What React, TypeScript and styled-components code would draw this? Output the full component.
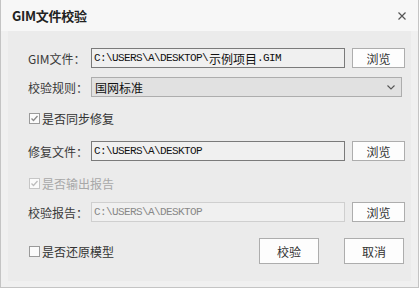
import React from 'react';
import styled, { createGlobalStyle } from 'styled-components';

const GlobalStyle = createGlobalStyle`
    html, body {
        margin: 0;
        padding: 0;
        background: #f0f0f0;
    }
    * {
        box-sizing: border-box;
    }
`;

const Window = styled.div`
    width: 419px;
    height: 288px;
    background: #f0f0f0;
    border: 1px solid #c4c4c4;
    border-top: none;
    display: flex;
    flex-direction: column;
    font-family: 'Noto Sans CJK SC', 'Noto Sans', sans-serif;
    color: #333;
    overflow: hidden;
`;

const TitleBar = styled.div`
    height: 31px;
    flex: none;
    background: #f7f7f7;
    display: flex;
    align-items: center;
    justify-content: space-between;
    padding: 0 10px 0 11px;
`;

const Title = styled.div`
    font-size: 13px;
    font-weight: bold;
    color: #222;
    letter-spacing: -0.3px;
`;

const CloseButton = styled.div`
    width: 12px;
    height: 12px;
    display: flex;
    align-items: center;
    justify-content: center;
`;

const Outer = styled.div`
    flex: 1;
    padding: 0 7px 6px 7px;
    display: flex;
`;

const Panel = styled.div`
    flex: 1;
    background: #ebebeb;
    padding: 17px 0 0 19px;
    display: flex;
    flex-direction: column;
`;

const Row = styled.div<{ $mt?: number; $h?: number }>`
    display: flex;
    align-items: center;
    height: ${({ $h }) => $h ?? 20}px;
    margin-top: ${({ $mt }) => $mt ?? 0}px;
`;

const Label = styled.div`
    width: 64px;
    font-size: 12px;
    color: #3a3a3a;
    padding-left: 1px;
    white-space: nowrap;
`;

const Field = styled.div<{ $disabled?: boolean }>`
    width: 254px;
    height: 20px;
    border: 1px solid ${({ $disabled }) => ($disabled ? '#cfcfcf' : '#7a7a7a')};
    background: #f0f0f0;
    display: flex;
    align-items: center;
    padding-left: 2px;
    color: ${({ $disabled }) => ($disabled ? '#888' : '#111')};
    white-space: nowrap;
    overflow: hidden;
`;

const Mono = styled.span`
    font-family: 'Liberation Mono', monospace;
    font-size: 11px;
    letter-spacing: -0.6px;
`;

const Cjk = styled.span`
    font-family: 'Noto Sans CJK SC', sans-serif;
    font-size: 12px;
    margin-left: 1px;
`;

const Browse = styled.div`
    width: 53px;
    height: 20px;
    margin-left: 7px;
    border: 1px solid #adadad;
    background: #fdfdfd;
    font-size: 12px;
    color: #333;
    display: flex;
    align-items: center;
    justify-content: center;
`;

const Select = styled.div`
    width: 311px;
    height: 20px;
    border: 1px solid #adadad;
    background: #e1e1e1;
    display: flex;
    align-items: center;
    justify-content: space-between;
    padding: 0 6px 0 3px;
    font-size: 12px;
    color: #111;
`;

const Check = styled.label<{ $disabled?: boolean }>`
    display: flex;
    align-items: center;
    gap: 2px;
    font-size: 12px;
    margin-left: 2px;
    color: ${({ $disabled }) => ($disabled ? '#a8a8a8' : '#333')};
`;

const Box = styled.span<{ $disabled?: boolean }>`
    width: 11px;
    height: 11px;
    border: 1px solid ${({ $disabled }) => ($disabled ? '#c6c6c6' : '#9a9a9a')};
    background: #fbfbfb;
    display: flex;
    align-items: center;
    justify-content: center;
`;

const Actions = styled.div`
    margin-left: auto;
    margin-right: 7px;
    display: flex;
    gap: 25px;
`;

const ActionButton = styled.div`
    width: 60px;
    height: 26px;
    border: 1px solid #adadad;
    background: #fdfdfd;
    font-size: 12px;
    color: #333;
    display: flex;
    align-items: center;
    justify-content: center;
`;

const Tick: React.FC<{ color: string }> = ({ color }) => (
    <svg width="9" height="9" viewBox="0 0 9 9">
        <path d="M1.5 4.5 L3.5 6.5 L7.5 2" fill="none" stroke={color} strokeWidth="1.3" />
    </svg>
);

const Checkbox: React.FC<{ checked?: boolean; disabled?: boolean; children: React.ReactNode }> = ({
    checked,
    disabled,
    children,
}) => (
    <Check $disabled={disabled}>
        <Box $disabled={disabled}>{checked && <Tick color={disabled ? '#bdbdbd' : '#8a8a8a'} />}</Box>
        {children}
    </Check>
);

export default function App() {
    return (
        <>
            <GlobalStyle />
            <Window>
                <TitleBar>
                    <Title>GIM文件校验</Title>
                    <CloseButton>
                        <svg width="8" height="8" viewBox="0 0 8 8">
                            <path d="M0.5 0.5 L7.5 7.5 M7.5 0.5 L0.5 7.5" stroke="#555" strokeWidth="1.2" />
                        </svg>
                    </CloseButton>
                </TitleBar>
                <Outer>
                    <Panel>
                        <Row>
                            <Label>GIM文件：</Label>
                            <Field>
                                <Mono>C:\USERS\A\DESKTOP\</Mono>
                                <Cjk>示例项目</Cjk>
                                <Mono>.GIM</Mono>
                            </Field>
                            <Browse>浏览</Browse>
                        </Row>
                        <Row $mt={9}>
                            <Label>校验规则：</Label>
                            <Select>
                                <span>国网标准</span>
                                <svg width="8" height="5" viewBox="0 0 8 5">
                                    <path d="M0.5 0.5 L4 4 L7.5 0.5" fill="none" stroke="#555" strokeWidth="1.1" />
                                </svg>
                            </Select>
                        </Row>
                        <Row $mt={11}>
                            <Checkbox checked>是否同步修复</Checkbox>
                        </Row>
                        <Row $mt={13}>
                            <Label>修复文件：</Label>
                            <Field>
                                <Mono>C:\USERS\A\DESKTOP</Mono>
                            </Field>
                            <Browse>浏览</Browse>
                        </Row>
                        <Row $mt={12}>
                            <Checkbox checked disabled>
                                是否输出报告
                            </Checkbox>
                        </Row>
                        <Row $mt={9}>
                            <Label>校验报告：</Label>
                            <Field $disabled>
                                <Mono>C:\USERS\A\DESKTOP</Mono>
                            </Field>
                            <Browse>浏览</Browse>
                        </Row>
                        <Row $mt={16} $h={26}>
                            <Checkbox>是否还原模型</Checkbox>
                            <Actions>
                                <ActionButton>校验</ActionButton>
                                <ActionButton>取消</ActionButton>
                            </Actions>
                        </Row>
                    </Panel>
                </Outer>
            </Window>
        </>
    );
}
